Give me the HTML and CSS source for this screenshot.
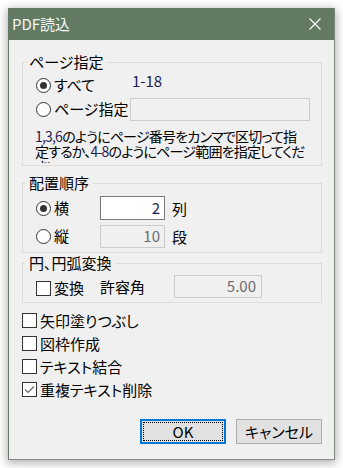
FILE: index.html
```html
<!DOCTYPE html>
<html lang="ja">
<head>
<meta charset="utf-8">
<title>PDF読込</title>
<link rel="stylesheet" href="styles.css">
</head>
<body>
<div class="window">
  <div class="titlebar">
    <span class="title">PDF読込</span>
    <svg class="close" width="12" height="12" viewBox="0 0 12 12"><path d="M0.5 0.5 L11.5 11.5 M11.5 0.5 L0.5 11.5" stroke="#ffffff" stroke-width="1.1" fill="none"/></svg>
  </div>
  <div class="content">
    <fieldset class="group g1">
      <legend>ページ指定</legend>
      <div class="inner">
        <div class="row r1">
          <label class="opt w94"><span class="radio on"></span>すべて</label>
          <span class="range num">1-18</span>
        </div>
        <div class="row r2">
          <label class="opt w94"><span class="radio"></span>ページ指定</label>
          <span class="field dis wide"></span>
        </div>
        <div class="desc"><span class="num">1,3,6</span>のようにページ番号をカンマで区切って指<br>定するか、<span class="num">4-8</span>のようにページ範囲を指定してくだ<br>さい。</div>
      </div>
    </fieldset>

    <fieldset class="group g2">
      <legend>配置順序</legend>
      <div class="inner">
        <div class="row r3">
          <label class="opt w64"><span class="radio on"></span>横</label>
          <span class="field edit small num">2</span>
          <span class="unit">列</span>
        </div>
        <div class="row r4">
          <label class="opt w64"><span class="radio"></span>縦</label>
          <span class="field dis small grey">10</span>
          <span class="unit">段</span>
        </div>
      </div>
    </fieldset>

    <fieldset class="group g3">
      <legend>円、円弧変換</legend>
      <div class="inner">
        <div class="row r5">
          <label class="opt w64 low"><span class="check"></span>変換</label>
          <span class="tol">許容角</span>
          <span class="field dis mid grey">5.00</span>
        </div>
      </div>
    </fieldset>

    <div class="checks">
      <label class="opt crow"><span class="check"></span>矢印塗りつぶし</label>
      <label class="opt crow"><span class="check"></span>図枠作成</label>
      <label class="opt crow"><span class="check"></span>テキスト結合</label>
      <label class="opt crow"><span class="check on"><svg width="13" height="13" viewBox="0 0 13 13"><path d="M2 6.5 L5 9.5 L11 3.5" stroke="#6a6a6a" stroke-width="1.2" fill="none"/></svg></span>重複テキスト削除</label>
    </div>

    <div class="buttons">
      <button class="btn ok"><span class="focus">OK</span></button>
      <button class="btn">キャンセル</button>
    </div>
  </div>
</div>
</body>
</html>
```

FILE: styles.css
```css
html, body {
  margin: 0;
  padding: 0;
  background: #ffffff;
}

body {
  font-family: "Noto Sans CJK JP", "Noto Sans", sans-serif;
  font-size: 15px;
  color: #000000;
  font-feature-settings: "palt";
}

.window {
  margin: 8px;
  width: 327px;
  height: 452px;
  box-sizing: border-box;
  background: #f0f0f0;
  border-left: 1px solid #637b63;
  border-right: 1px solid #7d857d;
  border-bottom: 1px solid #8a8a8a;
  box-shadow: 0 2px 9px 1px rgba(0, 0, 0, 0.32);
  display: flex;
  flex-direction: column;
}

.titlebar {
  height: 32px;
  flex: none;
  background: #637b63;
  display: flex;
  align-items: center;
  justify-content: space-between;
  padding-left: 3px;
}

.title {
  color: #f4f7f4;
  font-size: 15px;
  line-height: 18px;
  font-feature-settings: normal;
}

.close {
  margin-right: 13px;
}

.content {
  padding: 14px 12px 0 13px;
}

.group {
  margin: 0;
  padding: 0;
  border: 1px solid #dcdcdc;
  min-width: 0;
}

.group legend {
  margin-left: 2px;
  padding: 0 4px;
  line-height: 16px;
  height: 16px;
}

.inner {
  padding-left: 13px;
}

.g1 .inner { padding-bottom: 2px; }
.g2 { margin-top: 9px; }
.g2 .inner { padding-bottom: 4px; }
.g3 { margin-top: 2px; }
.g3 .inner { padding-bottom: 4px; }

.row {
  display: flex;
  align-items: center;
  height: 24px;
}

.r1 { margin-top: 3px; }
.r3 { margin-top: 5px; }
.r4 { margin-top: 4px; }
.r5 { margin-top: 3px; }

.opt {
  display: flex;
  align-items: center;
  gap: 3px;
  line-height: 18px;
  white-space: nowrap;
}

.w94 { width: 94px; flex: none; }
.w64 { width: 64px; flex: none; }
.low { margin-top: 4px; }

.radio {
  width: 15px;
  height: 15px;
  box-sizing: border-box;
  border: 1px solid #333333;
  border-radius: 50%;
  background: #ffffff;
  flex: none;
  display: grid;
  place-items: center;
}

.radio.on::after {
  content: "";
  width: 7px;
  height: 7px;
  border-radius: 50%;
  background: #333333;
}

.check {
  width: 15px;
  height: 15px;
  box-sizing: border-box;
  border: 1px solid #333333;
  background: #ffffff;
  flex: none;
  display: grid;
  place-items: center;
}

.range {
  align-self: flex-start;
  line-height: 16px;
  padding-left: 2px;
}

.num { color: #1d1d52; }

.field {
  box-sizing: border-box;
  display: flex;
  align-items: center;
  justify-content: flex-end;
  flex: none;
  line-height: 18px;
}

.field.dis {
  background: #f0f0f0;
  border: 1px solid #cccccc;
}

.field.edit {
  background: #ffffff;
  border: 1px solid #7a7a7a;
}

.wide { width: 180px; height: 23px; }
.small { width: 65px; height: 24px; padding-right: 4px; }
.r4 .small { height: 23px; }
.mid { width: 88px; height: 23px; padding-right: 5px; }

.grey { color: #6d6d6d; }

.unit {
  margin-left: 7px;
}

.tol {
  width: 74px;
  flex: none;
}

.desc {
  margin: 8px 0 0 -1px;
  height: 34px;
  overflow: hidden;
  font-size: 14px;
  letter-spacing: -0.8px;
  line-height: 15px;
  white-space: nowrap;
}

.checks {
  margin-top: 6px;
  display: flex;
  flex-direction: column;
}

.crow {
  height: 23px;
}

.buttons {
  margin-top: 18px;
  display: flex;
  justify-content: flex-end;
  gap: 10px;
}

.btn {
  width: 86px;
  height: 25px;
  box-sizing: border-box;
  margin: 0;
  padding: 0;
  background: #e1e1e1;
  border: 1px solid #adadad;
  font-family: "Noto Sans CJK JP", "Noto Sans", sans-serif;
  font-size: 15px;
  font-feature-settings: "palt";
  color: #000000;
  line-height: 18px;
}

.btn.ok {
  border: 2px solid #0078d7;
  padding: 1px;
  display: flex;
}

.focus {
  flex: 1;
  border: 1px dotted #000000;
  display: flex;
  align-items: center;
  justify-content: center;
}
```
